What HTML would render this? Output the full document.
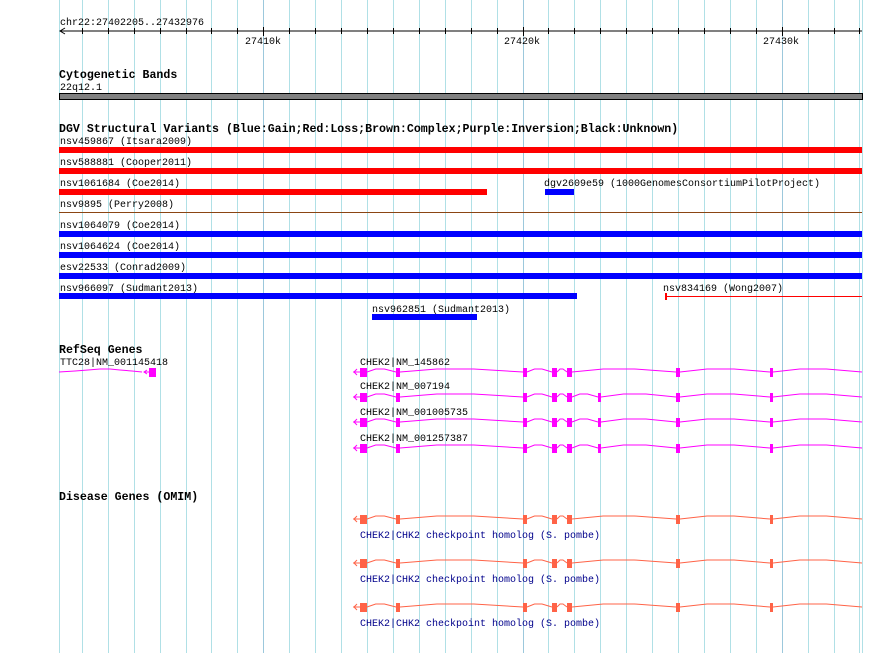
<!DOCTYPE html>
<html><head><meta charset="utf-8"><style>
html,body{margin:0;padding:0;background:#fff;width:890px;height:653px;overflow:hidden}
svg{display:block}
text{font-family:"Liberation Mono",monospace;font-size:10px;fill:#000}
.b{font-weight:bold;font-size:11.6px}
.o{fill:#00008b}
</style></head><body>
<svg id="s" width="890" height="653" xmlns="http://www.w3.org/2000/svg">
<g id="grid"></g>
<!-- ruler -->
<text x="60" y="25">chr22:27402205..27432976</text>
<line x1="60" y1="31" x2="862" y2="31" stroke="#000"/>
<polyline points="65,28 60,31 65,34" fill="none" stroke="#000"/>
<g id="ticks"></g>
<text x="245" y="44">27410k</text>
<text x="504" y="44">27420k</text>
<text x="763" y="44">27430k</text>

<text class="b" x="59" y="78">Cytogenetic Bands</text>
<text x="60" y="90">22q12.1</text>
<rect x="59.5" y="93.5" width="803" height="6" fill="#808080" stroke="#000"/>

<text class="b" x="59" y="132">DGV Structural Variants (Blue:Gain;Red:Loss;Brown:Complex;Purple:Inversion;Black:Unknown)</text>
<text x="60" y="144">nsv459867 (Itsara2009)</text>
<rect x="59" y="147" width="803" height="6" fill="#f00"/>
<text x="60" y="165">nsv588881 (Cooper2011)</text>
<rect x="59" y="168" width="803" height="6" fill="#f00"/>
<text x="60" y="186">nsv1061684 (Coe2014)</text>
<rect x="59" y="189" width="428" height="6" fill="#f00"/>
<text x="544" y="186">dgv2609e59 (1000GenomesConsortiumPilotProject)</text>
<rect x="545" y="189" width="29" height="6" fill="#00f"/>
<text x="60" y="207">nsv9895 (Perry2008)</text>
<rect x="59" y="212" width="803" height="1" fill="#8b4513"/>
<text x="60" y="228">nsv1064079 (Coe2014)</text>
<rect x="59" y="231" width="803" height="6" fill="#00f"/>
<text x="60" y="249">nsv1064624 (Coe2014)</text>
<rect x="59" y="252" width="803" height="6" fill="#00f"/>
<text x="60" y="270">esv22533 (Conrad2009)</text>
<rect x="59" y="273" width="803" height="6" fill="#00f"/>
<text x="60" y="291">nsv966097 (Sudmant2013)</text>
<rect x="59" y="293" width="518" height="6" fill="#00f"/>
<text x="663" y="291">nsv834169 (Wong2007)</text>
<rect x="665" y="296" width="197" height="1" fill="#f00"/>
<rect x="665" y="293" width="2" height="7" fill="#f00"/>
<text x="372" y="312">nsv962851 (Sudmant2013)</text>
<rect x="372" y="314" width="105" height="6" fill="#00f"/>

<text class="b" x="59" y="353">RefSeq Genes</text>
<text x="60" y="365">TTC28|NM_001145418</text>
<polyline points="59,372 75,371 88,370 100,369 110,369 120,370 132,371 142,372" fill="none" stroke="#f0f"/>
<polyline points="147,370 144,372 147,374 M" fill="none" stroke="#f0f"/>
<line x1="144" y1="372" x2="149" y2="372" stroke="#f0f"/>
<rect x="149" y="368" width="7" height="9" fill="#f0f"/>
<text x="360" y="365">CHEK2|NM_145862</text>
<text x="360" y="389">CHEK2|NM_007194</text>
<text x="360" y="415">CHEK2|NM_001005735</text>
<text x="360" y="441">CHEK2|NM_001257387</text>
<g id="genes"></g>

<text class="b" x="59" y="500">Disease Genes (OMIM)</text>
<text class="o" x="360" y="538">CHEK2|CHK2 checkpoint homolog (S. pombe)</text>
<text class="o" x="360" y="582">CHEK2|CHK2 checkpoint homolog (S. pombe)</text>
<text class="o" x="360" y="626">CHEK2|CHK2 checkpoint homolog (S. pombe)</text>
</svg>
<script>
var NS="http://www.w3.org/2000/svg";
function el(p,t,a){var e=document.createElementNS(NS,t);for(var k in a)e.setAttribute(k,a[k]);p.appendChild(e);return e;}
var g=document.getElementById('grid'),tk=document.getElementById('ticks');
el(g,'line',{x1:59.5,y1:0,x2:59.5,y2:653,stroke:'#b0e0e6'});
for(var k=-7;k<=23;k++){var x=Math.round(263.3+25.92*k)+0.5;if(x>862)break;
 var major=(k%10==0);
 el(g,'line',{x1:x,y1:0,x2:x,y2:653,stroke:major?'#9cc8dc':'#b0e0e6'});
 el(tk,'line',{x1:x,y1:major?27:28,x2:x,y2:major?36:34,stroke:'#000'});}
el(g,'line',{x1:862.5,y1:0,x2:862.5,y2:653,stroke:'#b0e0e6'});
var G=document.getElementById('genes');
function gene(y,ex,col){
 var pts=[[360,ex[0][0]]];var segs=[];var prev=ex[0][0]+ex[0][1];
 for(var i=1;i<ex.length;i++){segs.push([prev,ex[i][0]]);prev=ex[i][0]+ex[i][1];}
 segs.push([prev,862]);
 segs.forEach(function(s){var a=s[0],b=s[1],w=b-a;
  var p=a+','+y+' '+(a+w*0.3)+','+(y-3)+' '+(a+w*0.6)+','+(y-3)+' '+b+','+y;
  el(G,'polyline',{points:p,fill:'none',stroke:col});});
 el(G,'line',{x1:353,y1:y,x2:360,y2:y,stroke:col});
 el(G,'polyline',{points:'357,'+(y-3)+' 354,'+y+' 357,'+(y+3),fill:'none',stroke:col});
 ex.forEach(function(e){el(G,'rect',{x:e[0],y:y-4,width:e[1],height:9,fill:col});});
}
var base=[[360,7],[396,4],[523,4],[552,5],[567,5],[676,4],[770,3]];
var wide=[[360,7],[396,4],[523,4],[552,5],[567,5],[598,3],[676,4],[770,3]];
gene(372,base,'#f0f');gene(397,wide,'#f0f');gene(422,wide,'#f0f');gene(448,wide,'#f0f');
gene(519,base,'#ff6347');gene(563,base,'#ff6347');gene(607,base,'#ff6347');
</script>
</body></html>
